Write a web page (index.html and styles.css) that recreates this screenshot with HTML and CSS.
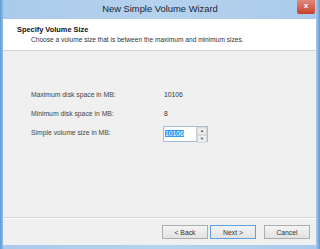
FILE: index.html
```html
<!DOCTYPE html>
<html lang="en">
<head>
    <meta charset="UTF-8">
    <title>New Simple Volume Wizard</title>
    <link rel="stylesheet" href="styles.css">
</head>
<body>

<div class="window">
    <div class="titlebar">
        <span class="title">New Simple Volume Wizard</span>
        <span class="close-btn">x</span>
    </div>

    <div class="dialog">
        <div class="header">
            <div class="heading">Specify Volume Size</div>
            <div class="subheading">Choose a volume size that is between the maximum and minimum sizes.</div>
        </div>

        <div class="content">
            <div class="row">
                <span class="label">Maximum disk space in MB:</span>
                <span class="value">10106</span>
            </div>
            <div class="row">
                <span class="label">Minimum disk space in MB:</span>
                <span class="value">8</span>
            </div>
            <div class="row">
                <span class="label">Simple volume size in MB:</span>
                <div class="spinbox">
                    <span class="spin-text"><span class="selected">10106</span></span>
                    <span class="spin-arrows">
                        <span class="arrow">&#9650;</span>
                        <span class="arrow">&#9660;</span>
                    </span>
                </div>
            </div>
        </div>

        <div class="buttons">
            <button class="btn">&lt; Back</button>
            <button class="btn btn-default">Next &gt;</button>
            <button class="btn btn-cancel">Cancel</button>
        </div>
    </div>
</div>

</body>
</html>
```

FILE: styles.css
```css
body {
    margin: 0;
    background-color: #8dbbe6;
    font-family: "Liberation Sans", Arial, sans-serif;
}

.window {
    width: 320px;
    height: 249px;
    display: flex;
    flex-direction: column;
    background: linear-gradient(to right, #5d9ad6 0px, #a9cbeb 4px, #b5d2ee 50%, #a9cbeb calc(100% - 4px), #5d9ad6 100%);
}

.titlebar {
    height: 19px;
    position: relative;
    display: flex;
    justify-content: center;
    align-items: center;
}

.title {
    font-size: 9.4px;
    color: #1a2633;
    margin-top: -2px;
}

.close-btn {
    position: absolute;
    top: 0;
    right: 5px;
    width: 18px;
    height: 14px;
    background: linear-gradient(#e08a7a, #c8402e);
    color: #fff;
    font-size: 8px;
    font-weight: bold;
    text-align: center;
    line-height: 12px;
    border-radius: 0 0 2px 2px;
}

.dialog {
    flex: 1;
    margin: 0 4px 4px 3px;
    background-color: #f0f0f0;
    display: flex;
    flex-direction: column;
}

.header {
    height: 32px;
    background-color: #fff;
    border-bottom: 1px solid #d4d4d4;
    padding-left: 14px;
    box-sizing: border-box;
}

.heading {
    font-size: 7.4px;
    font-weight: bold;
    color: #111;
    margin-top: 6px;
}

.subheading {
    font-size: 6.6px;
    color: #333;
    margin-top: 2px;
    padding-left: 14px;
}

.content {
    flex: 1;
    padding: 34px 0 0 28px;
    border-bottom: 1px solid #d4d4d4;
    box-shadow: 0 1px 0 #fff;
}

.row {
    display: flex;
    align-items: center;
    height: 19px;
    font-size: 6.8px;
    color: #444;
}

.label {
    width: 133px;
}

.value {
    color: #333;
}

.spinbox {
    display: flex;
    width: 43px;
    height: 14px;
    border: 1px solid #a9bcd0;
    background-color: #fff;
    margin-left: -1px;
    margin-top: 2px;
}

.spin-text {
    flex: 1;
    padding: 3px 0 0 1px;
}

.selected {
    background-color: #3399ff;
    color: #fff;
}

.spin-arrows {
    width: 10px;
    display: flex;
    flex-direction: column;
    border-left: 1px solid #cfcfcf;
}

.arrow {
    flex: 1;
    font-size: 4px;
    color: #444;
    text-align: center;
    line-height: 6px;
    background-color: #ececec;
    border: 1px solid #d8d8d8;
}

.buttons {
    height: 27px;
    display: flex;
    align-items: center;
    justify-content: flex-end;
    padding-right: 6px;
    gap: 2px;
}

.btn {
    width: 46px;
    height: 14px;
    padding: 0;
    font-family: "Liberation Sans", Arial, sans-serif;
    font-size: 6.8px;
    color: #333;
    background: linear-gradient(#f4f4f4, #e2e2e2);
    border: 1px solid #adadad;
    margin-top: 1px;
}

.btn-default {
    border-color: #5fa0dc;
}

.btn-cancel {
    margin-left: 6px;
}
```
